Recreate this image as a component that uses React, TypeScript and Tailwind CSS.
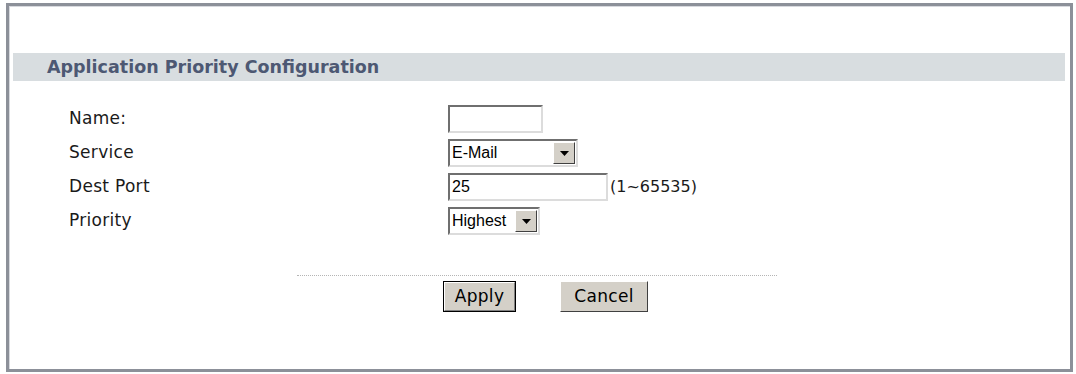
import React from "react";

const verdana = "font-['DejaVu_Sans',Verdana,sans-serif]";
const arial = "font-['Liberation_Sans',Arial,sans-serif]";

function DropArrow() {
  return (
    <div className="w-[22px] h-[22px] bg-[#d4d0c8] border border-t-white border-l-white border-b-[#404040] border-r-[#404040] flex items-center justify-center">
      <svg width="9" height="5" viewBox="0 0 9 5">
        <path d="M0 0 H9 L4.5 5 Z" fill="#000" />
      </svg>
    </div>
  );
}

function Select({ value, width }: { value: string; width: string }) {
  return (
    <div
      className={`${width} h-[28px] bg-white border-2 border-t-[#6f6f6f] border-l-[#6f6f6f] border-b-[#dcdcdc] border-r-[#dcdcdc] flex items-center justify-between pl-[2px] pr-[1px] ${arial} text-[16px] text-black`}
    >
      <span>{value}</span>
      <DropArrow />
    </div>
  );
}

function TextBox({ value, width }: { value?: string; width: string }) {
  return (
    <div
      className={`${width} h-[28px] bg-white border-2 border-t-[#6f6f6f] border-l-[#6f6f6f] border-b-[#dcdcdc] border-r-[#dcdcdc] flex items-center pl-[2px] ${arial} text-[16px] text-black`}
    >
      {value}
    </div>
  );
}

export default function App() {
  const rows: { label: string; control: React.ReactNode }[] = [
    { label: "Name:", control: <TextBox width="w-[95px]" /> },
    { label: "Service", control: <Select value="E-Mail" width="w-[130px]" /> },
    {
      label: "Dest Port",
      control: (
        <div className="flex items-center gap-[2px]">
          <TextBox value="25" width="w-[160px]" />
          <span className="text-[16px] text-[#1a1a1a]">(1~65535)</span>
        </div>
      ),
    },
    { label: "Priority", control: <Select value="Highest" width="w-[92px]" /> },
  ];

  return (
    <div className={`w-[1076px] h-[374px] bg-white pt-[3px] pl-[6px] ${verdana}`}>
      <div className="w-[1067px] h-[369px] border-[3px] border-[#8c9099] shadow-[inset_1px_1px_0_#d7d9de] flex flex-col">
        {/* section header */}
        <div className="mt-[47px] ml-[4px] mr-[5px] h-[28px] bg-[#d8dde0] flex items-center pl-[34px]">
          <span className="text-[17.5px] font-bold text-[#4d5873]">Application Priority Configuration</span>
        </div>

        {/* form rows */}
        <div className="mt-[24px] flex flex-col gap-[6px]">
          {rows.map((r) => (
            <div key={r.label} className="h-[28px] flex items-center">
              <div className="w-[439px] pl-[60px] text-[17px] tracking-[0.3px] text-[#1a1a1a]">{r.label}</div>
              {r.control}
            </div>
          ))}
        </div>

        {/* separator + buttons */}
        <div className="mt-[40px] ml-[288px] w-[480px] border-t border-dotted border-[#b5b5b5]" />
        <div className="mt-[5px] flex gap-[44px] pl-[434px]">
          <button className="w-[73px] h-[31px] border border-black bg-[#d4d0c8] text-[17px] tracking-[0.3px] text-black">
            <div className="w-full h-full border border-t-white border-l-white border-b-[#808080] border-r-[#808080] flex items-center justify-center">
              Apply
            </div>
          </button>
          <button className="w-[88px] h-[31px] bg-[#d4d0c8] border border-t-white border-l-white border-b-[#404040] border-r-[#404040] text-[17px] tracking-[0.3px] text-black flex items-center justify-center">
            Cancel
          </button>
        </div>
      </div>
    </div>
  );
}
